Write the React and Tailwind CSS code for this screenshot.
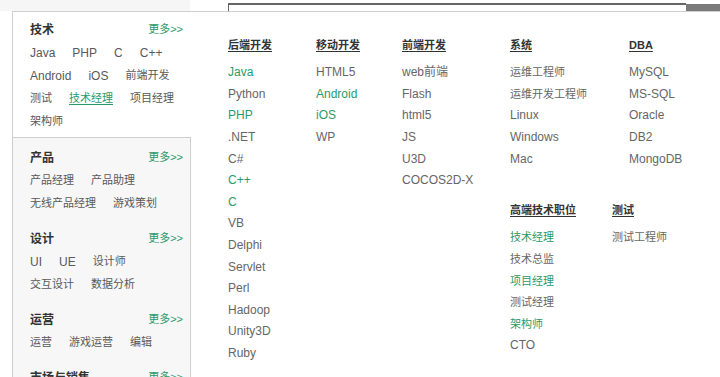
import React from "react";

const G = "g";
const sideGroups = [
  {
    title: "技术",
    active: true,
    rows: [
      ["Java", "PHP", "C", "C++"],
      ["Android", "iOS", "前端开发"],
      ["测试", ["技术经理", "u"], "项目经理"],
      ["架构师"],
    ],
  },
  { title: "产品", rows: [["产品经理", "产品助理"], ["无线产品经理", "游戏策划"]] },
  { title: "设计", rows: [["UI", "UE", "设计师"], ["交互设计", "数据分析"]] },
  { title: "运营", rows: [["运营", "游戏运营", "编辑"]] },
  { title: "市场与销售", rows: [["市场营销", "市场策划"], ["商务渠道", "销售"]] },
];

const cols1 = [
  {
    title: "后端开发",
    w: "w-[88px]",
    items: [["Java", G], "Python", ["PHP", G], ".NET", "C#", ["C++", G], ["C", G], "VB", "Delphi", "Servlet", "Perl", "Hadoop", "Unity3D", "Ruby"],
  },
  { title: "移动开发", w: "w-[86px]", items: ["HTML5", ["Android", G], ["iOS", G], "WP"] },
  { title: "前端开发", w: "w-[108px]", items: ["web前端", "Flash", "html5", "JS", "U3D", "COCOS2D-X"] },
];
const rowA = [
  { title: "系统", w: "w-[119px]", items: ["运维工程师", "运维开发工程师", "Linux", "Windows", "Mac"] },
  { title: "DBA", w: "", items: ["MySQL", "MS-SQL", "Oracle", "DB2", "MongoDB"] },
];
const rowB = [
  { title: "高端技术职位", w: "w-[102px]", items: [["技术经理", G], "技术总监", ["项目经理", G], "测试经理", ["架构师", G], "CTO"] },
  { title: "测试", w: "", items: ["测试工程师"] },
];

const isCJK = (t) => /^[\u4e00-\u9fff]+$/.test(t);

function Item({ it, side }) {
  const text = Array.isArray(it) ? it[0] : it;
  const flag = Array.isArray(it) ? it[1] : null;
  const size = isCJK(text) ? "text-[11px]" : "text-[12px]";
  let color = side ? "text-[#595959]" : "text-[#666666]";
  if (flag === "g") color = "text-[#2b9a6b]";
  if (flag === "u") color = "text-[#2b9a6b] underline underline-offset-2";
  return <span className={`${size} ${color} whitespace-nowrap`}>{text}</span>;
}

function Col({ c }) {
  return (
    <div className={`${c.w} shrink-0 flex flex-col`}>
      <div className="text-[11px] font-bold text-[#333] underline underline-offset-2 leading-[21.6px] mb-[3.6px] whitespace-nowrap">
        {c.title}
      </div>
      {c.items.map((it, i) => (
        <div key={i} className="leading-[21.6px] h-[21.6px]">
          <Item it={it} />
        </div>
      ))}
    </div>
  );
}

export default function App() {
  return (
    <div
      className="w-[720px] h-[377px] overflow-hidden bg-white relative"
      style={{ fontFamily: '"Liberation Sans", "Noto Sans CJK SC", sans-serif' }}
    >
      {/* top strip */}
      <div className="flex h-[11px]">
        <div className="w-[190px] h-full bg-[#f6f6f6]" />
        <div className="w-[38px]" />
        <div className="w-[458px] mt-[3px] h-[8px] border-t-2 border-l border-[#666] bg-white" />
        <div className="flex-1 mt-[4px] h-[7px] bg-[#7a7a7a]" />
      </div>

      {/* dropdown panel */}
      <div className="ml-[12px] border-t border-l border-[#cfcfcf] flex h-[366px]">
        {/* sidebar */}
        <div className="w-[178px] shrink-0 flex flex-col">
          {sideGroups.map((g, gi) => (
            <div
              key={gi}
              className={
                g.active
                  ? "bg-white border-b border-[#cfcfcf] pt-[6px] pb-[4px] pl-[17px] pr-[8px]"
                  : "bg-[#f7f7f7] border-r border-[#cfcfcf] pt-[8px] pb-[4px] pl-[17px] pr-[7px]"
              }
            >
              <div className="flex justify-between items-center h-[23px]">
                <span className="text-[12px] font-bold text-[#333]">{g.title}</span>
                <span className="text-[11px] text-[#2b9a6b]">更多&gt;&gt;</span>
              </div>
              {g.rows.map((r, ri) => (
                <div key={ri} className="flex gap-x-[17px] h-[23px] items-center">
                  {r.map((it, ii) => (
                    <Item key={ii} it={it} side />
                  ))}
                </div>
              ))}
            </div>
          ))}
          <div className="flex-1 bg-[#f7f7f7] border-r border-[#cfcfcf]" />
        </div>

        {/* right content */}
        <div className="flex-1 pl-[37px] pt-[23px] flex">
          {cols1.map((c, i) => (
            <Col key={i} c={c} />
          ))}
          <div className="flex flex-col">
            <div className="flex">
              {rowA.map((c, i) => (
                <Col key={i} c={c} />
              ))}
            </div>
            <div className="flex mt-[32px]">
              {rowB.map((c, i) => (
                <Col key={i} c={c} />
              ))}
            </div>
          </div>
        </div>
      </div>
    </div>
  );
}
